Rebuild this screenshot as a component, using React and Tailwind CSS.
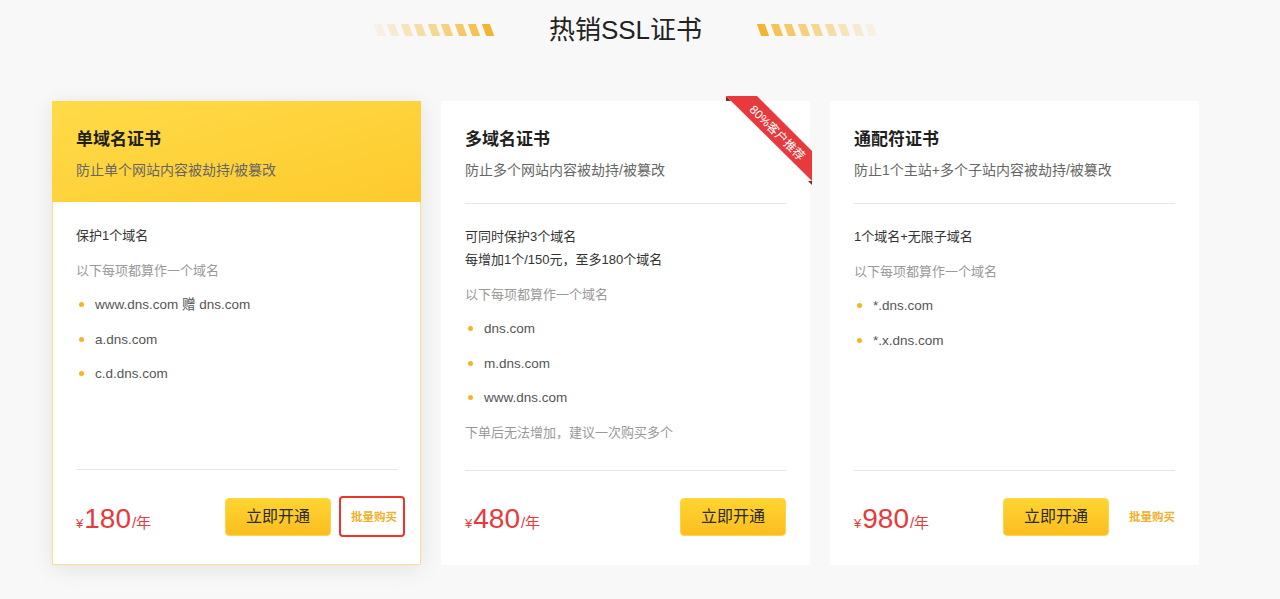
import React from "react";

const FONT = { fontFamily: '"Liberation Sans", "Noto Sans CJK SC", sans-serif' };

const STRIPE_OPACITY = ["opacity-10", "opacity-20", "opacity-30", "opacity-40", "opacity-50", "opacity-60", "opacity-70", "opacity-80", "opacity-100"];

function Stripes({ reverse }) {
  const list = reverse ? [...STRIPE_OPACITY].reverse() : STRIPE_OPACITY;
  return (
    <div className="flex items-center gap-[5.5px]">
      {list.map((o, i) => (
        <span key={i} className={`block w-[8px] h-[12px] bg-[#f2b530] skew-x-[20deg] ${o}`} />
      ))}
    </div>
  );
}

function Ribbon() {
  return (
    <div className="absolute top-[-6px] right-[-3px] w-[86px] h-[90px] pointer-events-none">
      <svg width="86" height="90" viewBox="0 0 86 90" className="absolute inset-0">
        <polygon points="0,0 5,5 0,5" fill="#9c1b1b" />
        <polygon points="82,85 86,85 86,89" fill="#9c1b1b" />
        <polygon points="0,0 31,0 86,55 86,85" fill="#e8393c" />
      </svg>
      <div className="absolute left-[-14px] top-[27px] w-[130px] h-[20px] rotate-45 flex items-center justify-center">
        <span className="text-[12px] leading-none text-white">80%客户推荐</span>
      </div>
    </div>
  );
}

const cards = [
  {
    name: "单域名证书",
    desc: "防止单个网站内容被劫持/被篡改",
    lead: ["保护1个域名"],
    items: ["www.dns.com 赠 dns.com", "a.dns.com", "c.d.dns.com"],
    price: "180",
    batch: true,
    hot: true,
  },
  {
    name: "多域名证书",
    desc: "防止多个网站内容被劫持/被篡改",
    lead: ["可同时保护3个域名", "每增加1个/150元，至多180个域名"],
    items: ["dns.com", "m.dns.com", "www.dns.com"],
    note: "下单后无法增加，建议一次购买多个",
    price: "480",
    ribbon: true,
  },
  {
    name: "通配符证书",
    desc: "防止1个主站+多个子站内容被劫持/被篡改",
    lead: ["1个域名+无限子域名"],
    items: ["*.dns.com", "*.x.dns.com"],
    price: "980",
    batch: true,
  },
];

function Card({ c, first }) {
  return (
    <div
      className={`relative flex flex-col w-[369px] h-[464px] bg-white border ${
        c.hot ? "border-[#fae08a] shadow-[0_4px_22px_rgba(0,0,0,0.09)]" : "border-white"
      }`}
    >
      {c.ribbon && <Ribbon />}
      <div className={`h-[101px] px-[23px] pt-[26px] ${c.hot ? "bg-gradient-to-br from-[#ffdb48] to-[#fdca2c] -mx-px -mt-px px-[24px] pt-[27px]" : ""}`}>
        <div className="text-[17px] leading-[24px] font-semibold text-[#1f1f1f]">{c.name}</div>
        <div className="mt-[8px] text-[14px] leading-[20px] text-[#666]">{c.desc}</div>
      </div>
      <div className="px-[23px]">
        <div className={`h-px ${c.hot ? "" : "bg-[#e5e5e5]"}`} />
      </div>
      <div className="h-[266px] px-[23px] pt-[21px] text-[13px] leading-[23px]">
        {c.lead.map((t, i) => (
          <div key={i} className="text-[#333]">{t}</div>
        ))}
        <div className="mt-[11.5px] text-[#999]">以下每项都算作一个域名</div>
        {c.items.map((t, i) => (
          <div key={i} className="mt-[11.5px] flex items-center text-[13.5px] text-[#555]">
            <span className="ml-[3px] w-[5px] h-[5px] rounded-full bg-[#f5b523]" />
            <span className="ml-[11px]">{t}</span>
          </div>
        ))}
        {c.note && <div className="mt-[11.5px] text-[#999]">{c.note}</div>}
      </div>
      <div className="px-[23px]">
        <div className="h-px bg-[#e5e5e5]" />
      </div>
      <div className="flex-1 flex items-center px-[23px] pb-[1px]">
        <div className="flex items-baseline text-[#e8393c] pt-[6px]">
          <span className="text-[13px] mr-[1px]">¥</span>
          <span className="text-[28px] leading-none">{c.price}</span>
          <span className="text-[15px] ml-[1px]">/年</span>
        </div>
        <div className="ml-auto flex items-center">
          <button className="w-[106px] h-[38px] rounded-[4px] border border-[#fcd34a] bg-gradient-to-b from-[#ffd530] to-[#fbbd20] text-[16px] text-[#2a2a2a]">
            立即开通
          </button>
          {c.batch && (
            <span className="relative ml-[20px] text-[11.5px] leading-[14px] font-bold text-[#efb12c]">
              批量购买
              {first && (
                <span className="absolute left-[-12px] right-[-8px] top-[-14px] bottom-[-13px] border-2 border-[#f0322a] rounded-[4px]" />
              )}
            </span>
          )}
        </div>
      </div>
    </div>
  );
}

export default function App() {
  return (
    <div className="min-h-[599px] bg-[#f8f8f8]" style={FONT}>
      <div className="w-[1147px] ml-[52px] pt-[12px]">
        <div className="h-[36px] flex items-center justify-center">
          <Stripes />
          <h2 className="mx-[57px] text-[26px] leading-[36px] text-[#222]">热销SSL证书</h2>
          <Stripes reverse />
        </div>
        <div className="mt-[53px] flex gap-[20px]">
          {cards.map((c, i) => (
            <Card key={i} c={c} first={i === 0} />
          ))}
        </div>
      </div>
    </div>
  );
}
